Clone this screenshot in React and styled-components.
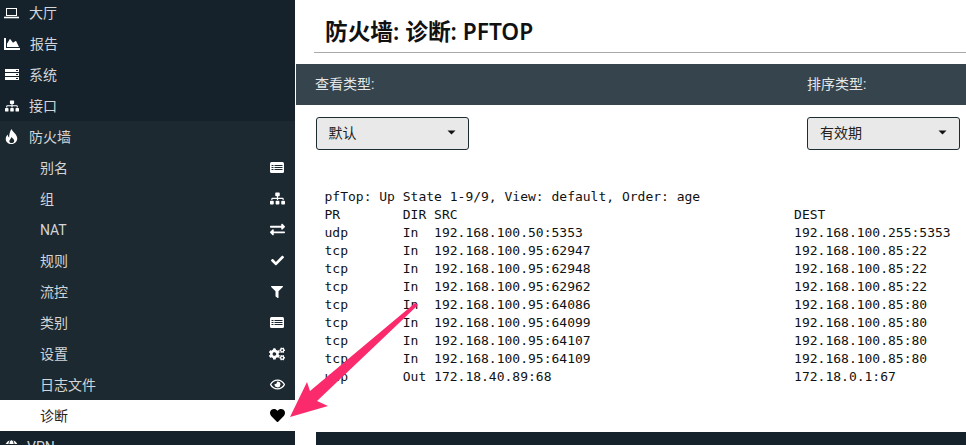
import React from "react";
import styled, { createGlobalStyle } from "styled-components";
import {
  FaChartArea, FaSitemap, FaExchangeAlt,
  FaCheck, FaFilter, FaCogs, FaRegEye, FaHeart, FaGlobe,
} from "react-icons/fa";

const GlobalStyle = createGlobalStyle`
  html, body { margin: 0; padding: 0; background: #fff; }
  body { font-family: "Roboto", "Noto Sans CJK SC", sans-serif; }
`;

const topItems = [
  { label: "大厅", icon: <LaptopIcon /> },
  { label: "报告", icon: <FaChartArea size={16} /> },
  { label: "系统", icon: <ServerIcon /> },
  { label: "接口", icon: <FaSitemap size={14} /> },
  { label: "防火墙", icon: <FlameIcon />, open: true },
];

const subItems = [
  { label: "别名", icon: <ListIcon /> },
  { label: "组", icon: <FaSitemap size={15} /> },
  { label: "NAT", icon: <FaExchangeAlt size={15} /> },
  { label: "规则", icon: <FaCheck size={13} /> },
  { label: "流控", icon: <FaFilter size={12} /> },
  { label: "类别", icon: <ListIcon /> },
  { label: "设置", icon: <FaCogs size={16} /> },
  { label: "日志文件", icon: <FaRegEye size={15} /> },
  { label: "诊断", icon: <FaHeart size={15} />, active: true },
];

const row = (pr, dir, src, dest) =>
  pr.padEnd(10) + dir.padEnd(4) + src.padEnd(46) + dest;

const pfTop = [
  "pfTop: Up State 1-9/9, View: default, Order: age",
  row("PR", "DIR", "SRC", "DEST"),
  row("udp", "In", "192.168.100.50:5353", "192.168.100.255:5353"),
  row("tcp", "In", "192.168.100.95:62947", "192.168.100.85:22"),
  row("tcp", "In", "192.168.100.95:62948", "192.168.100.85:22"),
  row("tcp", "In", "192.168.100.95:62962", "192.168.100.85:22"),
  row("tcp", "In", "192.168.100.95:64086", "192.168.100.85:80"),
  row("tcp", "In", "192.168.100.95:64099", "192.168.100.85:80"),
  row("tcp", "In", "192.168.100.95:64107", "192.168.100.85:80"),
  row("tcp", "In", "192.168.100.95:64109", "192.168.100.85:80"),
  row("udp", "Out", "172.18.40.89:68", "172.18.0.1:67"),
].join("\n");

function LaptopIcon() {
  return (
    <svg width="15" height="12" viewBox="0 0 15 12" fill="none" stroke="currentColor">
      <rect x="2.5" y="1.5" width="10" height="7" strokeWidth="1" />
      <path d="M0 10.5h15" strokeWidth="1.6" />
    </svg>
  );
}

function ServerIcon() {
  return (
    <svg width="14" height="11" viewBox="0 0 14 11">
      <path d="M0 0h14v3H0zM0 4h14v3H0zM0 8h14v3H0z" fill="currentColor" />
      <path d="M11 1h2v1h-2zM11 5h2v1h-2zM11 9h2v1h-2z" fill="#15222c" />
    </svg>
  );
}

function ListIcon() {
  return (
    <svg width="14" height="11" viewBox="0 0 14 11">
      <rect width="14" height="11" rx="1.5" fill="currentColor" />
      <path d="M1.5 3h2v1h-2zM4.5 3h8v1h-8zM1.5 5h2v1h-2zM4.5 5h8v1h-8zM1.5 7h2v1h-2zM4.5 7h8v1h-8z" fill="#1d2930" />
    </svg>
  );
}

function FlameIcon() {
  return (
    <svg width="13" height="15" viewBox="0 0 13 16">
      <path
        fillRule="evenodd"
        fill="currentColor"
        d="M6.5 0C7.5 3 12 5 12.6 9.5C13 13 10 16 6.5 16C3 16 0 13.5 0.4 10C0.6 8 1.8 6.5 2.6 5.8C2.6 7.2 3 8.4 4 9C4 6 4.6 3 6.5 0ZM6.6 15C4.8 15 3.8 13.6 4.3 12.2C4.8 11 6.2 10 6.2 8.4C7.8 10 9.7 11 9.4 13C9.2 14.2 8 15 6.6 15Z"
      />
    </svg>
  );
}

function Caret() {
  return (
    <svg width="9" height="5" viewBox="0 0 9 5">
      <path d="M0.5 0.5h8L4.5 4.5z" fill="#111" />
    </svg>
  );
}

export default function App() {
  return (
    <Page>
      <GlobalStyle />
      <Sidebar>
        {topItems.map((item) => (
          <TopRow key={item.label} $open={item.open}>
            <TopIcon>{item.icon}</TopIcon>
            <span>{item.label}</span>
          </TopRow>
        ))}
        {subItems.map((item) => (
          <SubRow key={item.label} $active={item.active}>
            <span>{item.label}</span>
            <SubIcon $active={item.active}>{item.icon}</SubIcon>
          </SubRow>
        ))}
        <TopRow>
          <TopIcon $tight><FaGlobe size={13} /></TopIcon>
          <span>VPN</span>
        </TopRow>
      </Sidebar>
      <Main>
        <TitleBlock>
          <Title>防火墙: 诊断: PFTOP</Title>
        </TitleBlock>
        <Band>
          <span>查看类型:</span>
          <SortColumn>排序类型:</SortColumn>
        </Band>
        <Controls>
          <Select><span>默认</span><Caret /></Select>
          <Select><span>有效期</span><Caret /></Select>
        </Controls>
        <Output>{pfTop}</Output>
        <FooterBlock />
      </Main>
      <Arrow width="966" height="445" viewBox="0 0 966 445">
        <polygon
          points="290,417 307,382 310,391 415,303 418,305 317,401 328,406"
          fill="#fb2a6c"
        />
      </Arrow>
    </Page>
  );
}

const Page = styled.div`
  position: relative;
  display: flex;
  width: 966px;
  height: 445px;
  overflow: hidden;
`;

const Sidebar = styled.nav`
  flex: 0 0 295px;
  margin-top: -3px;
  background: #15222c;
`;

const TopRow = styled.div`
  display: flex;
  align-items: center;
  box-sizing: border-box;
  height: 31px;
  padding-left: 4px;
  font-size: 14px;
  line-height: 18px;
  color: #d2d6d9;
  background: ${(p) => (p.$open ? "#1d2930" : "transparent")};
`;

const TopIcon = styled.span`
  display: flex;
  align-items: center;
  justify-content: center;
  min-width: 15px;
  margin-right: ${(p) => (p.$tight ? "8px" : "10px")};
  color: #fff;
`;

const SubRow = styled.div`
  display: flex;
  align-items: center;
  justify-content: space-between;
  box-sizing: border-box;
  height: 31px;
  padding: 0 10px 0 40px;
  font-size: 14px;
  line-height: 18px;
  color: ${(p) => (p.$active ? "#222" : "#d2d6d9")};
  background: ${(p) => (p.$active ? "#fff" : "#1d2930")};
`;

const SubIcon = styled.span`
  display: flex;
  align-items: center;
  justify-content: center;
  width: 16px;
  color: ${(p) => (p.$active ? "#000" : "#fff")};
`;

const Main = styled.main`
  flex: 1;
  min-width: 0;
  padding-left: 1px;
`;

const TitleBlock = styled.header`
  box-sizing: border-box;
  height: 53px;
  margin-left: 18px;
  padding-left: 11px;
  border-bottom: 1px solid #a9a9a9;
`;

const Title = styled.h1`
  margin: 0;
  padding-top: 17px;
  font-family: "Noto Sans", "Noto Sans CJK SC", sans-serif;
  font-size: 22.7px;
  font-weight: 600;
  line-height: 30px;
  color: #111;
`;

const Band = styled.div`
  display: flex;
  align-items: center;
  box-sizing: border-box;
  height: 41px;
  margin-top: 11px;
  padding: 0 0 2px 19px;
  font-size: 14px;
  line-height: 18px;
  color: #e4e7e9;
  background: #36444d;
`;

const SortColumn = styled.span`
  margin-left: auto;
  width: 159px;
`;

const Controls = styled.div`
  display: flex;
  justify-content: space-between;
  padding: 12px 6px 0 19.5px;
`;

const Select = styled.div`
  display: flex;
  align-items: center;
  justify-content: space-between;
  box-sizing: border-box;
  width: 153px;
  height: 33px;
  padding: 0 12px 2px;
  border: 1px solid #1d2b33;
  border-radius: 3px;
  background: #e9e9e9;
  font-size: 14px;
  line-height: 18px;
  color: #222;
`;

const Output = styled.pre`
  margin: 0;
  padding: 38px 0 0 28.5px;
  font-family: "DejaVu Sans Mono", monospace;
  font-size: 13px;
  line-height: 18px;
  color: #111;
`;

const FooterBlock = styled.div`
  height: 40px;
  margin: 46px 0 0 20px;
  background: #15222c;
`;

const Arrow = styled.svg`
  position: absolute;
  left: 0;
  top: 0;
  pointer-events: none;
`;
